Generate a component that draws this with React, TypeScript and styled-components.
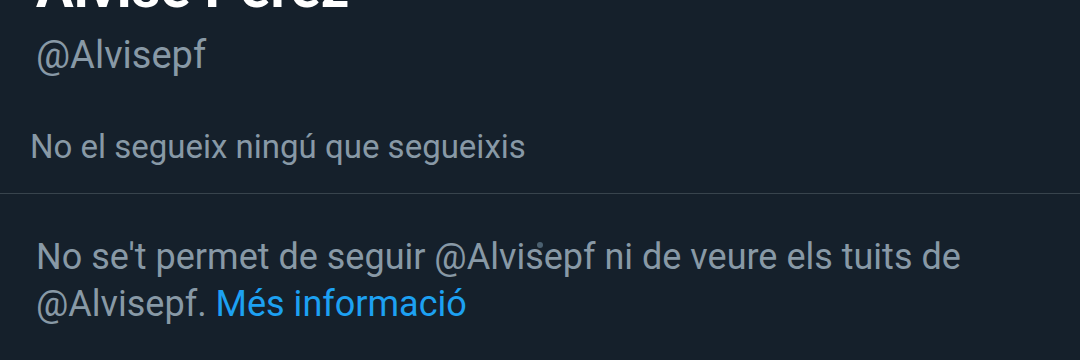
import React from "react";
import styled, { createGlobalStyle } from "styled-components";

const GlobalStyle = createGlobalStyle`
  html, body {
    margin: 0;
    padding: 0;
    background-color: #15202b;
    overflow: hidden;
  }
`;

const Page = styled.div`
  position: relative;
  width: 1080px;
  height: 360px;
  overflow: hidden;
  background-color: #15202b;
  font-family: Roboto, "Noto Sans", sans-serif;
`;

const Header = styled.header`
  display: flex;
  flex-direction: column;
  gap: 11px;
  margin-top: -45px;
  padding-left: 36px;
`;

const Name = styled.h1`
  margin: 0;
  font-size: 56px;
  line-height: 66px;
  font-weight: 700;
  color: #ffffff;
`;

const Handle = styled.div`
  font-size: 38px;
  line-height: 46px;
  color: #8899a6;
`;

const FollowInfo = styled.div`
  margin-top: 48px;
  padding: 0 0 25px 30px;
  border-bottom: 1px solid #38444d;
  font-size: 33px;
  line-height: 42px;
  color: #8899a6;
`;

const Notice = styled.p`
  margin: 0;
  padding: 40px 60px 0 36px;
  font-size: 36px;
  line-height: 47px;
  color: #8899a6;
`;

const Link = styled.a`
  color: #1da1f2;
  text-decoration: none;
`;

const TouchDot = styled.span`
  position: absolute;
  left: 537px;
  top: 242px;
  width: 6px;
  height: 6px;
  border-radius: 50%;
  background-color: #4b6070;
`;

export default function App() {
  return (
    <Page>
      <GlobalStyle />
      <Header>
        <Name>Alvise Pérez</Name>
        <Handle>@Alvisepf</Handle>
      </Header>
      <FollowInfo>No el segueix ningú que segueixis</FollowInfo>
      <Notice>
        No se't permet de seguir @Alvisepf ni de veure els tuits de @Alvisepf.{" "}
        <Link href="#">Més informació</Link>
      </Notice>
      <TouchDot />
    </Page>
  );
}
